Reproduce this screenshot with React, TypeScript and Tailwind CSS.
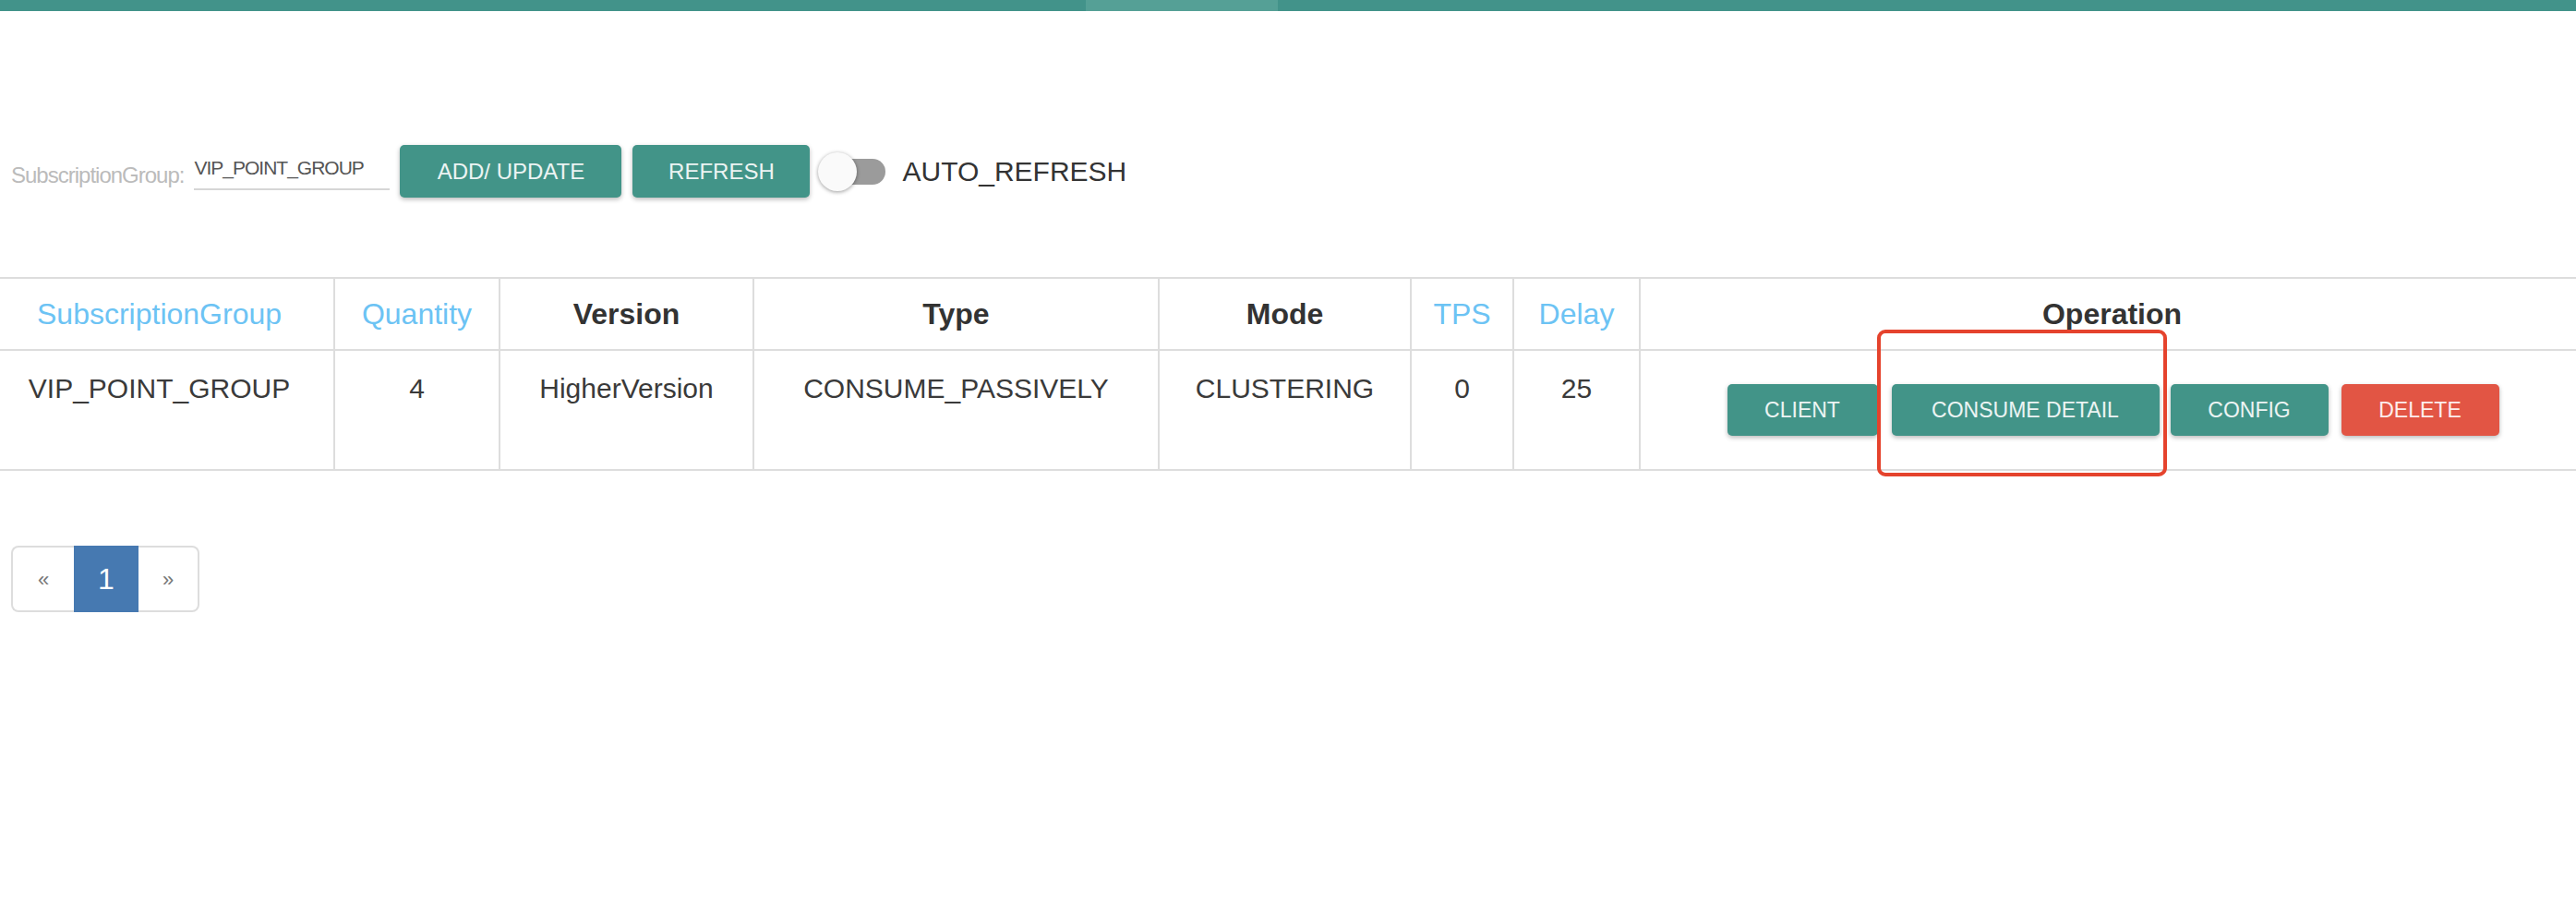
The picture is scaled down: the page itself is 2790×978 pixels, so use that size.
import React from "react";

const cols = [
  { label: "SubscriptionGroup", sortable: true, w: "w-[362px]" },
  { label: "Quantity", sortable: true, w: "w-[179px]" },
  { label: "Version", sortable: false, w: "w-[275px]" },
  { label: "Type", sortable: false, w: "w-[439px]" },
  { label: "Mode", sortable: false, w: "w-[273px]" },
  { label: "TPS", sortable: true, w: "w-[111px]" },
  { label: "Delay", sortable: true, w: "w-[137px]" },
  { label: "Operation", sortable: false, w: "w-[1014px]" },
];

const row = ["VIP_POINT_GROUP", "4", "HigherVersion", "CONSUME_PASSIVELY", "CLUSTERING", "0", "25"];

function OpButton({ label, width, danger }: { label: string; width: string; danger?: boolean }) {
  return (
    <button
      className={`${width} h-[56px] rounded-[5px] text-[23px] text-white/90 shadow-[0_2px_5px_rgba(0,0,0,0.28)] ${
        danger ? "bg-[#e25544]" : "bg-[#429488]"
      }`}
    >
      {label}
    </button>
  );
}

export default function App() {
  return (
    <div className="relative w-[2790px] min-h-[978px] bg-white font-['Liberation_Sans',Arial,sans-serif] text-[#333]">
      {/* top progress bar */}
      <div className="flex h-[12px]">
        <div className="w-[1176px] bg-[#42938a]" />
        <div className="w-[208px] bg-[#55a096]" />
        <div className="flex-1 bg-[#42938a]" />
      </div>

      {/* toolbar */}
      <div className="mt-[145px] flex h-[57px] items-center pl-[12px]">
        <span className="text-[24px] tracking-[-1px] text-[#bbb] pt-[8px]">SubscriptionGroup:</span>
        <input
          readOnly
          value="VIP_POINT_GROUP"
          className="ml-[11px] w-[212px] h-[40px] border-b-2 border-[#d6d6d6] pb-[6px] text-[21px] tracking-[-1px] text-[#555] outline-none"
        />
        <button className="ml-[11px] w-[240px] h-[57px] rounded-[5px] bg-[#429488] text-[24px] text-white/90 shadow-[0_2px_5px_rgba(0,0,0,0.28)]">
          ADD/ UPDATE
        </button>
        <button className="ml-[12px] w-[192px] h-[57px] rounded-[5px] bg-[#429488] text-[24px] text-white/90 shadow-[0_2px_5px_rgba(0,0,0,0.28)]">
          REFRESH
        </button>
        {/* switch */}
        <div className="relative ml-[9px] w-[73px] h-[42px] flex items-center">
          <div className="ml-[5px] w-[68px] h-[28px] rounded-full bg-[#9b9b9b]" />
          <div className="absolute left-0 top-0 w-[42px] h-[42px] rounded-full bg-[#fafafa] shadow-[0_1px_4px_rgba(0,0,0,0.4)]" />
        </div>
        <span className="ml-[18px] text-[30px] text-[#333]">AUTO_REFRESH</span>
      </div>

      {/* table */}
      <table className="mt-[86px] w-[2790px] table-fixed border-collapse border-y-2 border-[#ddd]">
        <colgroup>
          {cols.map((c) => (
            <col key={c.label} className={c.w} />
          ))}
        </colgroup>
        <thead>
          <tr className="border-b-2 border-[#ddd]">
            {cols.map((c, i) => (
              <th
                key={c.label}
                className={`h-[78px] align-middle text-center text-[32px] ${
                  i > 0 ? "border-l-2 border-[#ddd]" : "pr-[16px]"
                } ${i === cols.length - 1 ? "pl-[8px]" : ""} ${
                  c.sortable ? "font-normal text-[#6cc3f4]" : "font-bold text-[#333]"
                }`}
              >
                {c.label}
              </th>
            ))}
          </tr>
        </thead>
        <tbody>
          <tr>
            {row.map((v, i) => (
              <td
                key={i}
                className={`h-[130px] align-top pt-[19px] text-center text-[30px] leading-[43px] text-[#3a3a3a] ${
                  i > 0 ? "border-l-2 border-[#ddd]" : "pr-[16px]"
                }`}
              >
                {v}
              </td>
            ))}
            <td className="h-[130px] align-middle border-l-2 border-[#ddd]">
              <div className="flex items-center justify-center pl-[10px]">
                <OpButton label="CLIENT" width="w-[163px]" />
                <div className="ml-[15px]">
                  <OpButton label="CONSUME DETAIL" width="w-[290px]" />
                </div>
                <div className="ml-[12px]">
                  <OpButton label="CONFIG" width="w-[171px]" />
                </div>
                <div className="ml-[14px]">
                  <OpButton label="DELETE" width="w-[171px]" danger />
                </div>
              </div>
            </td>
          </tr>
        </tbody>
      </table>

      {/* pagination */}
      <div className="mt-[81px] ml-[12px] flex h-[72px] w-fit">
        <div className="flex w-[68px] items-center justify-center rounded-l-[8px] border-2 border-r-0 border-[#ddd] text-[22px] text-[#777]">
          «
        </div>
        <div className="flex w-[70px] items-center justify-center bg-[#4679b1] text-[32px] text-white">1</div>
        <div className="flex w-[66px] items-center justify-center rounded-r-[8px] border-2 border-l-0 border-[#ddd] text-[22px] text-[#777]">
          »
        </div>
      </div>

      {/* annotation highlight */}
      <div className="absolute left-[2033px] top-[357px] w-[314px] h-[159px] rounded-[9px] border-[4px] border-[#e5432d]" />
    </div>
  );
}
